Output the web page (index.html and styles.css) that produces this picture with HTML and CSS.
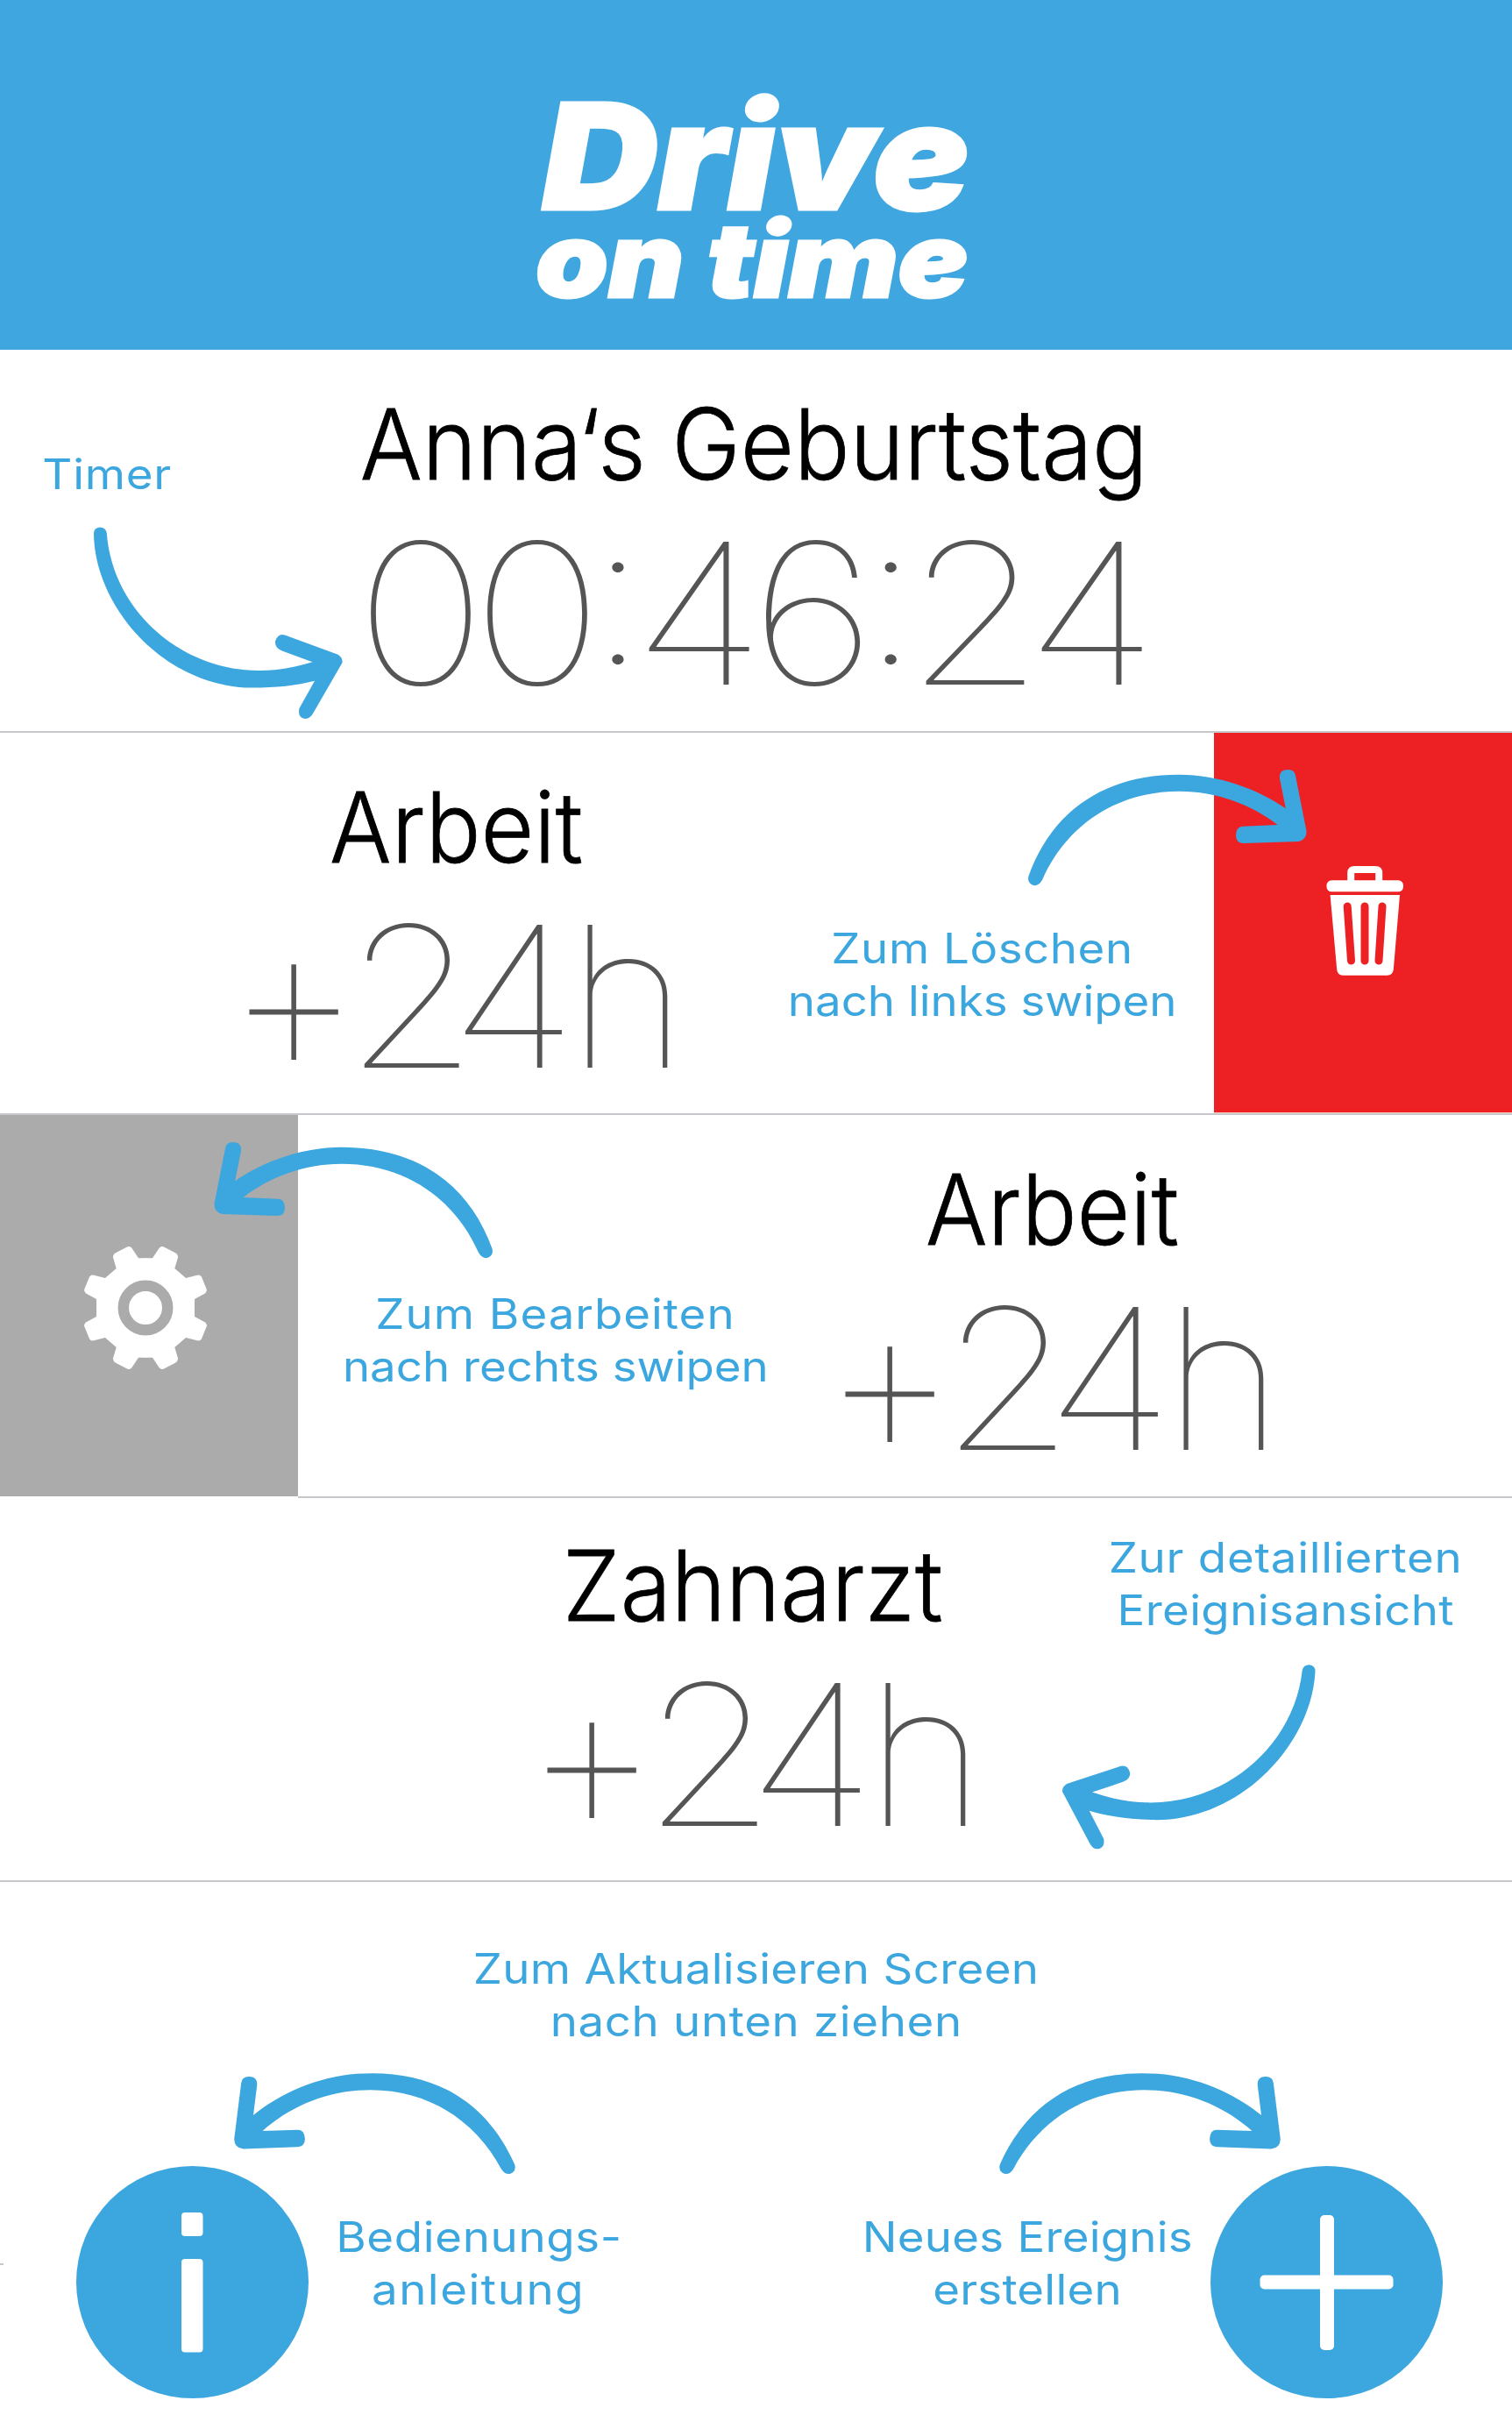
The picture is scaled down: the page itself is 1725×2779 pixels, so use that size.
FILE: index.html
```html
<!DOCTYPE html>
<html lang="de">
<head>
<meta charset="utf-8">
<title>Drive on time</title>
<link rel="stylesheet" href="styles.css">
</head>
<body>
<svg class="defs" aria-hidden="true">
  <symbol id="arrow-over" viewBox="1170 875 325 138">
    <path d="M1173.3 1000C1200 925 1260 883.7 1345.5 883.7C1390 883.7 1435 900 1466.8 922.3L1460 888Q1459 878 1469.6 878Q1477 878 1478 885L1490.5 948Q1491 958 1481 960L1419 962Q1410 962 1410 952.7Q1410 943 1418 942.7L1457.5 941C1428 918 1388 902.7 1345.5 902.7C1270 902.7 1215 945 1189 1004Q1185 1011 1179 1010Q1172 1008 1173.3 1000Z"/>
  </symbol>
  <symbol id="arrow-under" viewBox="104 599 290 224">
    <path d="M107 610C109 695 190 784.5 288 784.5C315 784.5 338 782 359 776.7L341.5 808Q339.500 817 346 819.500Q353 821.500 357.600 813L390.500 756Q391 750 385.600 746.700L325 724.500Q317 722 314 732Q313.500 739.500 322.500 742.700L356.500 755.300C338 761 318 765 296 765C205 765 128 695 121.800 608Q120.500 601.500 114 601.500Q106.500 602 107 610Z"/>
  </symbol>
</svg>

<header class="brand">
  <h1 class="brand-name">
    <span class="brand-top">Drive</span>
    <span class="brand-bottom">on time</span>
  </h1>
</header>

<main>
  <section class="row row-timer">
    <p class="note"><span class="line">Timer</span></p>
    <div class="event">
      <h2 class="title">Anna‘s Geburtstag</h2>
      <p class="time time-clock">00:46:24</p>
    </div>
    <div class="spacer"></div>
    <svg class="arrow arrow-under"><use href="#arrow-under"/></svg>
  </section>

  <section class="row row-delete">
    <div class="event">
      <h2 class="title title-short">Arbeit</h2>
      <p class="time"><span class="plus">+</span><span class="hours">24</span><span class="unit">h</span></p>
    </div>
    <p class="note"><span class="line">Zum Löschen</span><span class="line">nach links swipen</span></p>
    <button class="action action-delete" type="button" aria-label="Löschen">
      <svg class="icon-trash" viewBox="1513 988 88 125">
        <path class="handle" d="M1541.200 1007V996Q1541.200 992 1545.200 992H1569.200Q1573.200 992 1573.200 996V1007"/>
        <rect x="1513.500" y="1004.300" width="87.500" height="13" rx="5.500"/>
        <path d="M1517.600 1021H1597L1589.800 1106Q1589 1112.700 1582.500 1112.700H1532Q1526 1112.700 1525.200 1106Z"/>
        <path class="slots" d="M1537.200 1034L1541.500 1096M1557 1034V1096M1577 1034L1573 1096"/>
      </svg>
    </button>
    <svg class="arrow arrow-over"><use href="#arrow-over"/></svg>
  </section>

  <section class="row row-edit">
    <button class="action action-edit" type="button" aria-label="Bearbeiten">
      <svg class="icon-gear" viewBox="-71 -71 142 142">
        <defs>
          <path id="gear-quarter" d="M-1 -56.700H8L15.500 -68Q17.500 -71 21 -69.500L34 -62.800Q37.300 -61 37 -57.500L33.300 -45L46 -34L60 -37.500Q63.500 -37.500 64.500 -34L69.800 -21Q70.500 -18.500 68 -16.500L56 -10V1H-1Z"/>
        </defs>
        <use href="#gear-quarter"/>
        <use href="#gear-quarter" transform="scale(-1 1)"/>
        <use href="#gear-quarter" transform="scale(1 -1)"/>
        <use href="#gear-quarter" transform="scale(-1 -1)"/>
        <circle class="ring" r="25.200"/>
      </svg>
    </button>
    <p class="note"><span class="line">Zum Bearbeiten</span><span class="line">nach rechts swipen</span></p>
    <div class="event">
      <h2 class="title title-short">Arbeit</h2>
      <p class="time"><span class="plus">+</span><span class="hours">24</span><span class="unit">h</span></p>
    </div>
    <div class="spacer"></div>
    <svg class="arrow arrow-over"><use href="#arrow-over"/></svg>
  </section>

  <section class="row row-detail">
    <div class="spacer"></div>
    <div class="event">
      <h2 class="title title-medium">Zahnarzt</h2>
      <p class="time"><span class="plus">+</span><span class="hours">24</span><span class="unit">h</span></p>
    </div>
    <p class="note"><span class="line">Zur detaillierten</span><span class="line">Ereignisansicht</span></p>
    <svg class="arrow arrow-under"><use href="#arrow-under"/></svg>
  </section>
</main>

<footer class="footer">
  <p class="note note-refresh"><span class="line">Zum Aktualisieren Screen</span><span class="line">nach unten ziehen</span></p>
  <div class="toolbar">
    <button class="round" type="button" aria-label="Bedienungsanleitung">
      <svg viewBox="0 0 265 265">
        <rect x="120" y="53" width="24.500" height="27" rx="4"/>
        <rect x="120" y="106" width="24.500" height="106.500" rx="4"/>
      </svg>
    </button>
    <p class="note note-help"><span class="line">Bedienungs-</span><span class="line">anleitung</span></p>
    <p class="note note-new"><span class="line">Neues Ereignis</span><span class="line">erstellen</span></p>
    <button class="round" type="button" aria-label="Neues Ereignis">
      <svg viewBox="0 0 265 265">
        <rect x="56.500" y="124.500" width="152" height="16" rx="5"/>
        <rect x="125" y="56" width="16" height="154" rx="5"/>
      </svg>
    </button>
  </div>
  <svg class="arrow arrow-over arrow-help"><use href="#arrow-over"/></svg>
  <svg class="arrow arrow-over arrow-new"><use href="#arrow-over"/></svg>
</footer>
</body>
</html>
```
FILE: styles.css
```css
:root {
  --blue: #3ca6df;
  --line: #c7c7cc;
}

* { box-sizing: border-box; }

body {
  margin: 0;
  background: #fff;
  font-family: Inter, "Liberation Sans", sans-serif;
  color: #000;
}

h1, h2, p { margin: 0; }

button {
  padding: 0;
  border: 0;
  background: none;
}

.defs {
  display: block;
  width: 0;
  height: 0;
}

/* Header */
.brand {
  height: 399px;
  padding-top: 116px;
  background: #40a6df;
  color: #fff;
}

.brand-name {
  display: flex;
  flex-direction: column;
  align-items: center;
  gap: 6px;
  font-style: italic;
  font-weight: 900;
  -webkit-text-stroke: 3px #fff;
}

.brand-top {
  font-size: 168px;
  line-height: 125px;
  transform: scaleX(1.087);
}

.brand-bottom {
  padding-right: 8px;
  font-size: 118px;
  line-height: 98px;
  transform: scaleX(1.125);
}

/* Event rows */
.row {
  position: relative;
  display: flex;
  height: 437px;
}

.row > .event,
.row > .note,
.row > .spacer {
  border-bottom: 2px solid var(--line);
}

.row-delete { height: 436px; }
.row-detail { height: 438px; }

.event {
  display: flex;
  flex-direction: column;
  align-items: center;
  gap: 43.500px;
  padding-top: 57px;
  white-space: nowrap;
}

.title {
  padding-right: 5px;
  font-size: 112px;
  font-weight: 300;
  line-height: 100px;
  -webkit-text-stroke: .8px #000;
  transform: scaleX(.942);
}

.title-short {
  padding-right: 5px;
  transform: scaleX(.936);
}

.title-medium {
  padding-right: 8px;
  transform: scaleX(.945);
}

.time {
  padding-right: 2px;
  font-size: 223.500px;
  font-weight: 100;
  line-height: 200px;
  color: #555;
}

.time-clock {
  padding-right: 14px;
  letter-spacing: -15.500px;
  font-feature-settings: "calt" 1, "case" 1;
  transform: scaleX(1.14);
}

.plus,
.hours,
.unit {
  display: inline-block;
  height: 200px;
}

.plus {
  margin-right: -14px;
  transform: scale(1.1, 1.18);
  transform-origin: 50% 117px;
}

.hours {
  letter-spacing: -26.500px;
  transform: scaleX(1.1);
  transform-origin: 0 0;
}

.unit {
  margin-left: 40px;
  transform: scaleX(1.04);
  transform-origin: 0 0;
}

.spacer { flex: 1; }

/* Explanatory notes */
.note {
  font-size: 48px;
  font-weight: 400;
  line-height: 60px;
  text-align: center;
  white-space: nowrap;
  color: var(--blue);
}

.line {
  display: block;
  width: fit-content;
  margin: 0 auto;
  transform: scaleX(1.1);
}

.row-timer .note { width: 244px; padding-top: 112px; letter-spacing: .7px; }
.row-timer .event { width: 1237px; }

.row-delete .event { width: 850px; padding-left: 195px; }
.row-delete .note { width: 535px; padding: 216px 0 0 6px; }
.row-delete .line:first-child { letter-spacing: .5px; }

.row-edit .note { width: 587px; padding-top: 197px; }
.row-edit .event { width: 551px; }
.row-edit .line:first-child { letter-spacing: .9px; }

.row-detail .event { width: 693px; padding-top: 49px; gap: 44px; }
.row-detail .note { width: 516px; padding-top: 38px; letter-spacing: .350px; }
.row-detail .line:first-child { letter-spacing: .7px; }

/* Swipe actions */
.action {
  display: flex;
  align-items: flex-start;
  width: 340px;
  border-bottom: 2px solid var(--line);
  background-clip: padding-box;
}

.action svg { display: block; fill: #fff; }

.action-delete {
  padding: 152px 0 0 128px;
  background-color: #ed2024;
  box-shadow: inset 0 -1px #fbd0c8;
}

.action-edit {
  padding: 149px 0 0 95px;
  border-bottom-color: #fff;
  background-color: #ababab;
}

.icon-trash { width: 88px; height: 125px; }
.icon-trash .handle { fill: none; stroke: #fff; stroke-width: 8; }
.icon-trash .slots {
  fill: none;
  stroke: #ed2024;
  stroke-width: 9;
  stroke-linecap: round;
}

.icon-gear { width: 142px; height: 142px; }
.icon-gear .ring { fill: none; stroke: #ababab; stroke-width: 12.500; }

/* Hand-drawn arrows lying over the rows */
.arrow {
  position: absolute;
  fill: var(--blue);
}

.arrow-over { width: 325px; height: 138px; }
.arrow-under { width: 290px; height: 224px; }

.row-timer .arrow { left: 104px; top: 200px; }
.row-delete .arrow { left: 1170px; top: 39px; }
.row-edit .arrow { left: 240px; top: 28px; transform: scaleX(-1); }
.row-detail .arrow { left: 1209.500px; top: 182.500px; transform: rotate(2deg) scaleX(-1); }
.arrow-help { left: 261.500px; top: 208.500px; transform: scaleX(-1) rotate(4.100deg); }
.arrow-new { left: 1140.700px; top: 208.500px; transform: rotate(4.100deg); }

/* Footer */
.footer {
  position: relative;
  height: 632px;
  padding-top: 69px;
}

.footer::before {
  content: "";
  position: absolute;
  left: 0;
  top: 435px;
  width: 4px;
  height: 2px;
  background: var(--line);
}

.toolbar {
  display: flex;
  padding: 135px 79px 0 87px;
}

.toolbar .note { padding-top: 51px; }

.note-refresh .line:first-child { letter-spacing: .3px; }
.note-refresh .line:last-child { letter-spacing: .6px; }
.note-help { width: 388px; letter-spacing: .6px; }
.note-help .line:last-child { letter-spacing: 1.400px; }
.note-new { width: 418px; margin-left: auto; letter-spacing: .2px; }

.round {
  width: 265px;
  height: 265px;
  border-radius: 50%;
  background: var(--blue);
}

.round svg {
  display: block;
  width: 265px;
  height: 265px;
  fill: #fff;
}
```
